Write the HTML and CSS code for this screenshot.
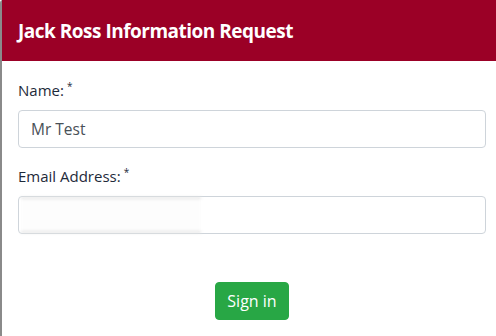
FILE: index.html
```html
<!DOCTYPE html>
<html lang="en">
<head>
<meta charset="utf-8">
<title>Jack Ross Information Request</title>
<link rel="stylesheet" href="styles.css">
</head>
<body>
<div class="card">
  <div class="card-header">
    <h5 class="card-title">Jack Ross Information Request</h5>
  </div>
  <form class="card-body">
    <div class="form-group">
      <label class="form-label" for="name">Name:<sup class="req">*</sup></label>
      <input class="form-control" id="name" type="text" value="Mr Test">
    </div>
    <div class="form-group">
      <label class="form-label" for="email">Email Address:<sup class="req">*</sup></label>
      <div class="field-wrap">
        <input class="form-control" id="email" type="text" value="">
        <span class="redacted"></span>
      </div>
    </div>
    <div class="actions">
      <button class="btn-success" type="button">Sign in</button>
    </div>
  </form>
</div>
</body>
</html>
```
FILE: styles.css
```css
html, body {
  margin: 0;
  padding: 0;
  overflow: hidden;
  background: #ffffff;
}
body {
  font-family: "Open Sans", "Noto Sans", sans-serif;
  color: #212529;
}
.card {
  width: 500px;
  border-left: 2px solid #8a8a8a;
  border-top-left-radius: 3px;
  min-height: 340px;
  background: #fff;
}
.card-header {
  background: #9b0026;
  height: 61px;
  display: flex;
  align-items: center;
  padding: 0 16px;
  box-sizing: border-box;
}
.card-title {
  margin: 0;
  color: #ffffff;
  font-size: 19px;
  font-weight: 700;
  letter-spacing: -0.5px;
}
.card-body {
  display: block;
  padding: 17px 16px 0 16px;
}
.form-group {
  margin-bottom: 16px;
}
.form-label {
  display: block;
  font-size: 15px;
  line-height: 24px;
  margin-bottom: 8px;
  color: #1e2a3a;
}
.req {
  font-size: 10px;
  margin-left: 3px;
  vertical-align: 6px;
  line-height: 0;
}
.field-wrap {
  position: relative;
}
.form-control {
  display: block;
  width: 100%;
  box-sizing: border-box;
  height: 38px;
  padding: 6px 12px;
  font-family: inherit;
  font-size: 15.5px;
  line-height: 24px;
  color: #495057;
  background: #fff;
  border: 1px solid #ced4da;
  border-radius: 4px;
  outline: none;
}
.redacted {
  position: absolute;
  left: 3px;
  top: 1px;
  width: 180px;
  height: 36px;
  background: #fdfdfd;
  border-top: 2px solid #e4e4e4;
  border-bottom: 2px solid #e4e4e4;
  box-sizing: border-box;
  filter: blur(1.5px);
}
.actions {
  display: flex;
  justify-content: center;
  padding-top: 32px;
}
.btn-success {
  background: #28a745;
  color: #fff;
  border: 1px solid #28a745;
  border-radius: 4px;
  height: 38px;
  padding: 0 11px;
  font-family: inherit;
  font-size: 16px;
  line-height: 24px;
}
```
